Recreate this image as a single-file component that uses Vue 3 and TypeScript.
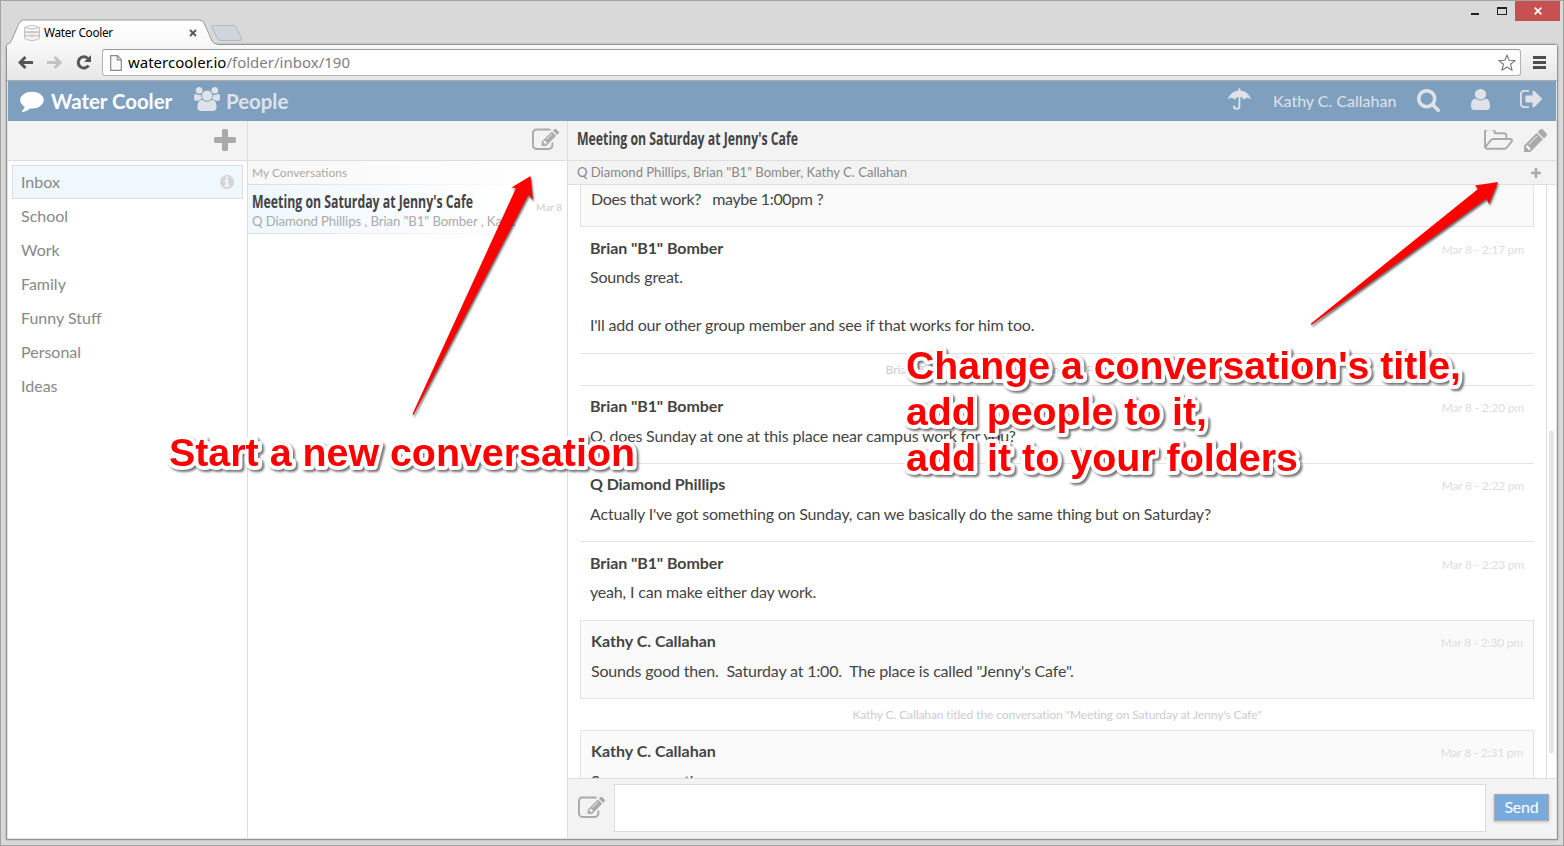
<script setup lang="ts">
interface Icon { box: string; d: string }
interface Entry {
  kind: 'message' | 'own' | 'event'
  name?: string
  time?: string
  lines: string[]
  cls?: string
}

const icons: Record<string, Icon> = {
  comment: { box: '0 128 1792 1668', d: 'M1792 896q0 174-120 321.5t-326 233-450 85.5q-70 0-145-8-198 175-460 242-49 14-114 22-17 2-30.5-9t-17.5-29v-1q-3-4-.5-12t2-10 4.5-9.5l6-9 7-8.5 8-9q7-8 31-34.5t34.5-38 31-39.5 32.5-51 27-59 26-76q-157-89-247.5-220t-90.5-281q0-130 71-248.5t191-204.5 286-136.5 348-50.5q244 0 450 85.5t326 233 120 321.5z' },
  users: { box: '0 0 1920 1792', d: 'M593 896q-162 5-265 128h-134q-82 0-138-40.5t-56-118.5q0-353 124-353 6 0 43.5 21t97.5 42.5 119 21.5q67 0 133-23-5 37-5 66 0 139 81 256zm1071 637q0 120-73 189.5t-194 69.5h-874q-121 0-194-69.5t-73-189.5q0-53 3.5-103.5t14-109 26.5-108.5 43-97.5 62-81 85.5-53.5 111.5-20q10 0 43 21.5t73 48 107 48 135 21.5 135-21.5 107-48 73-48 43-21.5q61 0 111.5 20t85.5 53.5 62 81 43 97.5 26.5 108.5 14 109 3.5 103.5zm-1024-1277q0 106-75 181t-181 75-181-75-75-181 75-181 181-75 181 75 75 181zm704 384q0 159-112.5 271.5t-271.5 112.5-271.5-112.5-112.5-271.5 112.5-271.5 271.5-112.5 271.5 112.5 112.5 271.5zm576 225q0 78-56 118.5t-138 40.5h-134q-103-123-265-128 81-117 81-256 0-29-5-66 66 23 133 23 59 0 119-21.5t97.5-42.5 43.5-21q124 0 124 353zm-128-609q0 106-75 181t-181 75-181-75-75-181 75-181 181-75 181 75 75 181z' },
  search: { box: '64 128 1664 1664', d: 'M1216 832q0-185-131.5-316.5t-316.5-131.5-316.5 131.5-131.5 316.5 131.5 316.5 316.5 131.5 316.5-131.5 131.5-316.5zm512 832q0 52-38 90t-90 38q-54 0-90-38l-343-342q-179 124-399 124-143 0-273.5-55.5t-225-150-150-225-55.5-273.5 55.5-273.5 150-225 225-150 273.5-55.5 273.5 55.5 225 150 150 225 55.5 273.5q0 220-124 399l343 343q37 37 37 90z' },
  user: { box: '256 128 1280 1536', d: 'M1536 1399q0 109-62.5 187t-150.5 78h-854q-88 0-150.5-78t-62.5-187q0-85 8.5-160.5t31.5-152 58.5-131 94-89 134.5-34.5q131 128 313 128t313-128q76 0 134.5 34.5t94 89 58.5 131 31.5 152 8.5 160.5zm-256-887q0 159-112.5 271.5t-271.5 112.5-271.5-112.5-112.5-271.5 112.5-271.5 271.5-112.5 271.5 112.5 112.5 271.5z' },
  signout: { box: '64 256 1568 1280', d: 'M704 1440q0 4 1 20t.5 26.5-3 23.5-10 19.5-20.5 6.5h-320q-119 0-203.5-84.5t-84.5-203.5v-704q0-119 84.5-203.5t203.5-84.5h320q13 0 22.5 9.5t9.5 22.5q0 4 1 20t.5 26.5-3 23.5-10 19.5-20.5 6.5h-320q-66 0-113 47t-47 113v704q0 66 47 113t113 47h312l11.5 1 11.5 3 8 5.5 7 9 2 13.5zm928-544q0 26-19 45l-544 544q-19 19-45 19t-45-19-19-45v-288h-448q-26 0-45-19t-19-45v-384q0-26 19-45t45-19h448v-288q0-26 19-45t45-19 45 19l544 544q19 19 19 45z' },
  plus: { box: '192 128 1408 1408', d: 'M1600 736v192q0 40-28 68t-68 28h-416v416q0 40-28 68t-68 28h-192q-40 0-68-28t-28-68v-416h-416q-40 0-68-28t-28-68v-192q0-40 28-68t68-28h416v-416q0-40 28-68t68-28h192q40 0 68 28t28 68v416h416q40 0 68 28t28 68z' },
  edit: { box: '0 96 1784 1440', d: 'M888 1184l116-116-152-152-116 116v56h96v96h56zm440-720q-16-16-33 1l-350 350q-17 17-1 33t33-1l350-350q17-17 1-33zm80 594v190q0 119-84.5 203.5t-203.5 84.5h-832q-119 0-203.5-84.5t-84.5-203.5v-832q0-119 84.5-203.5t203.5-84.5h832q63 0 117 25 15 7 18 23 3 17-9 29l-49 49q-14 14-32 8-23-6-45-6h-832q-66 0-113 47t-47 113v832q0 66 47 113t113 47h832q66 0 113-47t47-113v-126q0-13 9-22l64-64q15-15 35-7t20 29zm-96-738l288 288-672 672h-288v-288zm444 132l-92 92-288-288 92-92q28-28 68-28t68 28l152 152q28 28 28 68t-28 68z' },
  pencil: { box: '128 149 1515 1515', d: 'M491 1536l91-91-235-235-91 91v107h128v128h107zm523-928q0-22-22-22-10 0-17 7l-542 542q-7 7-7 17 0 22 22 22 10 0 17-7l542-542q7-7 7-17zm-54-192l416 416-832 832h-416v-416zm683 96q0 53-37 90l-166 166-416-416 166-165q36-38 90-38 53 0 91 38l235 234q37 39 37 91z' },
  folder: { box: '64 256 1909 1280', d: 'M1845 931q0-35-53-35h-1088q-40 0-85.5 21.5t-71.5 52.5l-294 363q-18 24-18 40 0 35 53 35h1088q40 0 86-22t71-53l294-363q18-22 18-39zm-1141-163h768v-160q0-40-28-68t-68-28h-576q-40 0-68-28t-28-68v-64q0-40-28-68t-68-28h-320q-40 0-68 28t-28 68v853l256-315q44-53 116-87.5t140-34.5zm1269 163q0 62-46 120l-295 363q-43 53-116 87.5t-140 34.5h-1088q-92 0-158-66t-66-158v-960q0-92 66-158t158-66h320q92 0 158 66t66 158v32h544q92 0 158 66t66 158v160h192q54 0 99 24.5t67 70.5q15 32 15 68z' },
  info: { box: '128 128 1536 1536', d: 'M1152 1376v-160q0-14-9-23t-23-9h-96v-512q0-14-9-23t-23-9h-320q-14 0-23 9t-9 23v160q0 14 9 23t23 9h96v320h-96q-14 0-23 9t-9 23v160q0 14 9 23t23 9h448q14 0 23-9t9-23zm-128-896v-160q0-14-9-23t-23-9h-192q-14 0-23 9t-9 23v160q0 14 9 23t23 9h192q14 0 23-9t9-23zm640 416q0 209-103 385.5t-279.5 279.5-385.5 103-385.5-103-279.5-279.5-103-385.5 103-385.5 279.5-279.5 385.5-103 385.5 103 279.5 279.5 103 385.5z' },
}

const folders = ['Inbox', 'School', 'Work', 'Family', 'Funny Stuff', 'Personal', 'Ideas']
const title = "Meeting on Saturday at Jenny's Cafe"
const nb = '\u00a0'

const entries: Entry[] = [
  { kind: 'own', cls: 'cut-top', lines: [`Does that work? ${nb} maybe 1:00pm ?`] },
  { kind: 'message', name: 'Brian "B1" Bomber', time: 'Mar 8 - 2:17 pm', lines: ['Sounds great.', nb, "I'll add our other group member and see if that works for him too."] },
  { kind: 'event', cls: 'joined', lines: ['Brian "B1" Bomber added Q Diamond Phillips to the conversation'] },
  { kind: 'message', cls: 'follow', name: 'Brian "B1" Bomber', time: 'Mar 8 - 2:20 pm', lines: ['Q, does Sunday at one at this place near campus work for you?'] },
  { kind: 'message', cls: 'follow', name: 'Q Diamond Phillips', time: 'Mar 8 - 2:22 pm', lines: ["Actually I've got something on Sunday, can we basically do the same thing but on Saturday?"] },
  { kind: 'message', cls: 'open', name: 'Brian "B1" Bomber', time: 'Mar 8 - 2:23 pm', lines: ['yeah, I can make either day work.'] },
  { kind: 'own', name: 'Kathy C. Callahan', time: 'Mar 8 - 2:30 pm', lines: [`Sounds good then. ${nb}Saturday at 1:00. ${nb}The place is called "Jenny's Cafe".`] },
  { kind: 'event', cls: 'bare', lines: [`Kathy C. Callahan titled the conversation "${title}"`] },
  { kind: 'own', name: 'Kathy C. Callahan', time: 'Mar 8 - 2:31 pm', lines: ['See you guys there.'] },
]

const notes = [
  { x: 169, y: 466, w: 466, text: 'Start a new conversation' },
  { x: 906, y: 379, w: 555, text: "Change a conversation's title," },
  { x: 906, y: 425, w: 301, text: 'add people to it,' },
  { x: 906, y: 471, w: 392, text: 'add it to your folders' },
]
</script>

<template>
  <div class="window">
    <div class="titlebar">
      <svg class="tab-shape" width="240" height="26" viewBox="0 0 240 26">
        <defs>
          <linearGradient id="tabfill" x1="0" y1="0" x2="0" y2="1">
            <stop offset="0" stop-color="#fff" /><stop offset="1" stop-color="#f8f8f8" />
          </linearGradient>
        </defs>
        <path d="M205 6.500h21q3 0 4 3l4.500 9.500q1 2.500-1.500 2.500h-19q-3 0-4-3l-5-9.500q-1-2.500 0-2.500z" fill="#d0d4dc" stroke="#b4b7bd" />
        <path d="M0 25.500q3-.5 4.500-4l7-16q2-4.500 5-4.500h176q3.500 0 5 4l7.500 17q1.500 3 5 3v1H0z" fill="url(#tabfill)" />
        <path d="M0 25.500q3-.5 4.500-4l7-16q2-4.500 5-4.500h176q3.500 0 5 4l7.500 17q1.500 3 5 3" fill="none" stroke="#999" />
      </svg>
      <div class="tab">
        <svg width="16" height="16" viewBox="0 0 16 16" fill="#f5f5f5" stroke="#c4c4c4">
          <path d="M.5 2.500q7.500-4 15 0v11q-7.500 4-15 0z" />
          <path d="M.5 2.500q7.500 3 15 0M.5 6.500q7.500 3 15 0M.5 10q7.500 3 15 0M.5 7.500q7.500-2 15 0M.5 11q7.500-2 15 0" fill="none" />
        </svg>
        <span class="tab-title">Water Cooler</span>
        <svg class="tab-close" width="8" height="8" viewBox="0 0 8 8"><path d="M1 1l6 6M7 1l-6 6" stroke="#555" stroke-width="1.800" /></svg>
      </div>
      <div class="controls">
        <svg class="min" width="38" height="9" viewBox="0 0 38 9" shape-rendering="crispEdges">
          <path d="M0 6h8v2H0zM26 0h10v8H26zM27 2v5h8V2z" fill="#222" fill-rule="evenodd" />
        </svg>
        <div class="close"><svg width="8" height="8" viewBox="0 0 8 8"><path d="M.7.7l6.600 6.600M7.300.7L.7 7.300" stroke="#fff" stroke-width="1.700" /></svg></div>
      </div>
    </div>

    <div class="frame">
      <div class="toolbar">
        <svg class="nav" width="76" height="16" viewBox="0 0 76 16" fill="none">
          <path d="M15 8.500H2M7.500 3L2 8.500 7.500 14" stroke="#555" stroke-width="3" />
          <path d="M29 8.500h13M36.500 3l5.500 5.500-5.500 5.500" stroke="#c3c3c3" stroke-width="3" />
          <path d="M70.500 11.500a5.600 5.600 0 1 1-.7-7" stroke="#555" stroke-width="3" />
          <path d="M73 1v7h-7z" fill="#555" />
        </svg>
        <div class="omnibox">
          <svg width="12" height="16" viewBox="0 0 12 16"><path d="M.7.700h6.800l3.800 4v10.600H.7zM7.300.7v4.200h4" fill="#fbfbfb" stroke="#8a8a8a" stroke-width="1.200" /></svg>
          <span class="url"><b>watercooler.io</b>/folder/inbox/190</span>
          <svg class="star" width="18" height="18" viewBox="0 0 18 18"><path d="M9 1l2.100 5.300 6 .3-4.600 3.600 1.600 6L9 13l-5.100 3.200 1.600-6L.9 6.600l6-.3z" fill="#fff" stroke="#777" stroke-width="1.100" stroke-linejoin="round" /></svg>
        </div>
        <svg class="menu" width="13" height="14" viewBox="0 0 13 14"><path d="M0 1.500h13M0 6.500h13M0 11.500h13" stroke="#4d4d4d" stroke-width="3" /></svg>
      </div>

      <div class="app">
        <header class="topbar">
          <svg class="i-comment" :viewBox="icons.comment.box"><path :d="icons.comment.d" /></svg>
          <span class="brand">Water Cooler</span>
          <svg class="i-users" :viewBox="icons.users.box" preserveAspectRatio="none"><path :d="icons.users.d" /></svg>
          <span class="people">People</span>
          <svg class="i-umbrella" viewBox="0 0 23 22">
            <path d="M10.500 2.500V1q0-1 .9-1t.9 1v1.500Q19.500 3 22.800 10.500q.2 1-.7.400-3.300-2.700-5.600.4-.5.500-.9 0-1.700-2.600-3.300-2.500v9.500q0 3.500-3.600 3.500T5 18.300q0-.9 1-.9t1 .9q0 1.600 1.700 1.600t1.800-1.600V8.800q-1.900 0-3.300 2.500-.4.500-.9 0-2.400-3.100-5.600-.4-.9.600-.7-.4Q3.500 3 10.500 2.500z" />
          </svg>
          <span class="me">Kathy C. Callahan</span>
          <svg class="i-search" :viewBox="icons.search.box"><path :d="icons.search.d" /></svg>
          <svg class="i-user" :viewBox="icons.user.box" preserveAspectRatio="none"><path :d="icons.user.d" /></svg>
          <svg class="i-signout" :viewBox="icons.signout.box"><path :d="icons.signout.d" /></svg>
        </header>

        <div class="columns">
          <nav class="folders">
            <div class="bar"><svg class="i-plus" :viewBox="icons.plus.box"><path :d="icons.plus.d" /></svg></div>
            <ul>
              <li v-for="(f, i) in folders" :key="f" :class="{ active: i === 0 }">
                <span>{{ f }}</span>
                <svg v-if="i === 0" class="i-info" :viewBox="icons.info.box"><path :d="icons.info.d" /></svg>
              </li>
            </ul>
          </nav>

          <section class="list">
            <div class="bar"><svg class="i-edit" :viewBox="icons.edit.box"><path :d="icons.edit.d" /></svg></div>
            <div class="list-head">My Conversations</div>
            <div class="conv">
              <div class="conv-main">
                <svg class="headline" width="230" height="24"><text x="0" y="18.500" textLength="221" lengthAdjust="spacingAndGlyphs">{{ title }}</text></svg>
                <div class="conv-names">Q Diamond Phillips , Brian "B1" Bomber , Kat...</div>
              </div>
              <span class="conv-date">Mar 8</span>
            </div>
          </section>

          <main class="thread">
            <div class="bar">
              <svg class="headline" width="230" height="24"><text x="0" y="18.500" textLength="221" lengthAdjust="spacingAndGlyphs">{{ title }}</text></svg>
              <svg class="i-folder" :viewBox="icons.folder.box"><path :d="icons.folder.d" /></svg>
              <svg class="i-pencil" :viewBox="icons.pencil.box"><path :d="icons.pencil.d" /></svg>
            </div>
            <div class="members">
              <span>Q Diamond Phillips, Brian "B1" Bomber, Kathy C. Callahan</span>
              <svg class="i-add" :viewBox="icons.plus.box"><path :d="icons.plus.d" /></svg>
            </div>
            <div class="scroll">
              <div class="messages">
                <article v-for="(e, i) in entries" :key="i" :class="[e.kind, e.cls]">
                  <div v-if="e.name" class="who"><b>{{ e.name }}</b><time>{{ e.time }}</time></div>
                  <p v-for="(l, j) in e.lines" :key="j">{{ l }}</p>
                </article>
              </div>
              <div class="track"><div class="thumb"></div></div>
            </div>
            <div class="composer">
              <svg class="i-edit" :viewBox="icons.edit.box"><path :d="icons.edit.d" /></svg>
              <div class="field"></div>
              <div class="send">Send</div>
            </div>
          </main>
        </div>
      </div>
    </div>

    <svg class="annotations" width="1564" height="846" viewBox="0 0 1564 846">
      <g class="arrows">
        <path d="M412.500 414L516 188l-4.500-.5L530.500 176l2.500 24-4.500-5.500L413.500 415z" />
        <path d="M1311 323.500L1478 189l-3-3.500L1498 182l-9 22-2.500-5.500L1311.500 325z" />
      </g>
      <g class="notes">
        <text v-for="n in notes" :key="n.text" :x="n.x" :y="n.y" :textLength="n.w" lengthAdjust="spacingAndGlyphs">{{ n.text }}</text>
      </g>
    </svg>
  </div>
</template>

<style>
html, body { margin: 0; overflow: hidden; }
</style>

<style scoped>
* { box-sizing: border-box; }
svg { display: block; flex: none; }
.window { position: relative; width: 1564px; height: 846px; background: #d9d9d9; border: 1px solid #a3a3a3; font-family: Lato, sans-serif; overflow: hidden; }
.titlebar { position: relative; height: 43px; display: flex; justify-content: space-between; }
.tab-shape { position: absolute; left: 6px; top: 18px; z-index: 2; }
.tab { position: relative; z-index: 3; display: flex; align-items: center; width: 196px; height: 18px; margin: 23px 0 0 23px; font: 12px/18px "Noto Sans", "Open Sans", sans-serif; color: #000; }
.tab-title { margin: -2px 0 0 4px; width: 145px; font-size: 11.8px; letter-spacing: -.3px; white-space: nowrap; }
.controls { display: flex; align-items: flex-start; margin-right: 3px; }
.min { margin: 6px 6px 0 0; }
.close { width: 45px; height: 20px; background: #c75050; display: flex; align-items: center; justify-content: center; }

.frame { margin: 0 5px; height: 796px; border: 1px solid #949494; border-radius: 3px 3px 0 0; box-shadow: 0 0 2px #999; display: flex; flex-direction: column; background: #e4e4e4; }
.toolbar { height: 36px; flex: none; display: flex; align-items: center; background: linear-gradient(#f8f8f8, #e7e7e7); border-bottom: 1px solid #aaa; padding: 0 10px 0 11px; }
.nav { margin-top: -1px; }
.omnibox { width: 1419px; height: 27px; margin: 0 0 0 8px; border: 1px solid #b3b3b3; border-top-color: #999; border-radius: 3px; background: #fff; display: flex; align-items: center; padding: 0 4px 0 7px; }
.url { flex: 1; margin: -2px 0 0 6px; font: 15px/24px "Noto Sans", "Open Sans", sans-serif; color: #808080; }
.url b { font-weight: 400; color: #000; }
.menu { margin-left: 12px; }

.app { flex: 1; margin: 0 0 1px 1px; width: 1548px; display: flex; flex-direction: column; background: #fff; min-height: 0; }
.topbar { height: 40px; flex: none; background: #7f9fbf; display: flex; align-items: flex-start; color: #dfe3e9; fill: #dfe3e9; }
.i-comment { width: 24px; height: 22px; margin: 9px 0 0 12px; fill: #fff; }
.brand { margin: 7px 0 0 7px; width: 143px; font: 700 20.400px/26px Lato, sans-serif; color: #fff; white-space: nowrap; }
.i-users { width: 26px; height: 24px; margin-top: 6px; }
.people { margin: 7px 0 0 6px; font: 700 20.400px/26px Lato, sans-serif; flex: 1; }
.i-umbrella { width: 23px; height: 22px; margin: 7px 22px 0 0; }
.me { margin-top: 9px; width: 144px; font-size: 16px; line-height: 22px; white-space: nowrap; }
.i-search { width: 23px; height: 23px; margin-top: 8px; }
.i-user { width: 19px; height: 21px; margin: 8px 0 0 31px; }
.i-signout { width: 22px; height: 18px; margin: 9px 14px 0 30px; }

.columns { flex: 1; display: flex; min-height: 0; }
.folders { width: 240px; border-right: 1px solid #ddd; }
.list { width: 320px; border-right: 1px solid #ddd; }
.thread { flex: 1; display: flex; flex-direction: column; min-width: 0; }
.bar { height: 40px; flex: none; background: #f3f3f3; border-bottom: 1px solid #ddd; display: flex; align-items: center; justify-content: flex-end; fill: #aaa; }
.i-plus { width: 22px; height: 22px; margin: -2px 11px 0 0; }
.folders ul { list-style: none; margin: 4px 4px; padding: 0; }
.folders li { height: 34px; border: 1px solid transparent; padding: 0 8px 2px; display: flex; justify-content: space-between; align-items: center; font-size: 16px; color: #888; }
.folders li.active { background: #eff7ff; border-color: #ddd; }
.i-info { width: 14px; height: 14px; fill: #d5d5d5; margin-top: 1px; }
.i-edit { width: 27px; height: 22px; fill: #aaa; }
.list .i-edit { margin: -3px 8px 0 0; }
.list-head { height: 24px; padding-left: 4px; font-size: 12px; line-height: 24px; color: #aaa; border-bottom: 1px solid; border-image: linear-gradient(90deg, #ddd, #fff 90%) 1; background: linear-gradient(90deg, #f8f8f8, #fff); }
.conv { height: 49px; display: flex; border-bottom: 1px solid; border-image: linear-gradient(90deg, #ddd, #fff 90%) 1; background: linear-gradient(90deg, #eff7ff, #fff 80%); }
.conv-main { width: 288px; padding: 4px 0 0 4px; }
.headline { overflow: visible; font: 700 18.300px "Liberation Sans Narrow", "Open Sans", sans-serif; fill: #444; }
.conv-names { margin-top: -1px; font-size: 13.200px; line-height: 19px; letter-spacing: -.1px; color: #aaa; white-space: nowrap; }
.conv-date { padding-top: 15px; font-size: 10.100px; line-height: 14px; color: #ccc; white-space: nowrap; }

.thread .headline { margin: -5px auto 0 9px; }
.i-folder { width: 29px; height: 20px; margin: -1px 11px 0 0; }
.i-pencil { width: 23px; height: 23px; margin: 0 9px 0 0; }
.members { height: 24px; flex: none; background: #f3f3f3; border-bottom: 1px solid #ddd; display: flex; align-items: center; justify-content: space-between; padding: 0 15px 1px 9px; font-size: 13.100px; letter-spacing: -.02px; color: #888; }
.i-add { width: 10px; height: 10px; fill: #aaa; margin-top: 2px; }
.scroll { flex: 1; min-height: 0; display: flex; overflow: hidden; }
.messages { width: 954px; margin-left: 12px; }
.track { margin-left: 12px; width: 10px; border-left: 1px solid #ddd; padding: 246px 0 0 2px; }
.thumb { width: 5px; height: 322px; background: #e5e5e5; }
article { border-bottom: 1px solid #e3e3e3; padding: 9px 10px 16px; color: #444; font-size: 16px; }
article p { margin: 0; line-height: 24px; white-space: nowrap; letter-spacing: -.185px; }
.who { display: flex; justify-content: space-between; height: 24px; margin-bottom: 5px; line-height: 24px; letter-spacing: -.08px; }
time { font-size: 12px; line-height: 28px; color: #ddd; letter-spacing: -.2px; }
.own { background: #fafafa; border: 1px solid #e3e3e3; padding: 8px 10px 15px; }
.own .who { margin-bottom: 6px; letter-spacing: 0; }
.cut-top { border-top: 0; padding-top: 2px; padding-bottom: 15px; }
.cut-top p { letter-spacing: -.35px; }
.follow { padding: 8px 10px 15px; }
.follow .who { margin-bottom: 6px; }
.follow p { letter-spacing: -.19px; }
.open { border-bottom: 0; }
.event { padding: 0; height: 32px; text-align: center; font-size: 12px; color: #ccc; }
.event p { line-height: 32px; letter-spacing: -.09px; }
.event.joined p { letter-spacing: -.01px; }
.bare { border-bottom: 0; height: 31px; }
.composer { height: 60px; flex: none; border-top: 1px solid #ddd; background: #f3f3f3; display: flex; align-items: center; padding: 0 0 2px 10px; }
.composer .i-edit { margin-top: -1px; }
.field { width: 872px; height: 48px; margin: 0 8px 0 9px; background: #fff; border: 1px solid #ddd; }
.send { width: 55px; height: 27px; border: 1px solid #aaa; background: #78aadd; color: #fff; font-size: 16px; line-height: 24px; letter-spacing: -.2px; text-align: center; box-shadow: 0 1px 3px #bbb; }

.annotations { position: absolute; left: -1px; top: -1px; z-index: 10; }
.arrows { fill: #f00; filter: drop-shadow(1px 2px 1px rgba(0, 0, 0, .6)); }
.notes { font: 700 39.500px "Liberation Sans", sans-serif; fill: #f00; stroke: #fff; stroke-width: 8px; stroke-linejoin: round; paint-order: stroke; filter: drop-shadow(2px 2px 1px rgba(0, 0, 0, .55)); }
</style>
